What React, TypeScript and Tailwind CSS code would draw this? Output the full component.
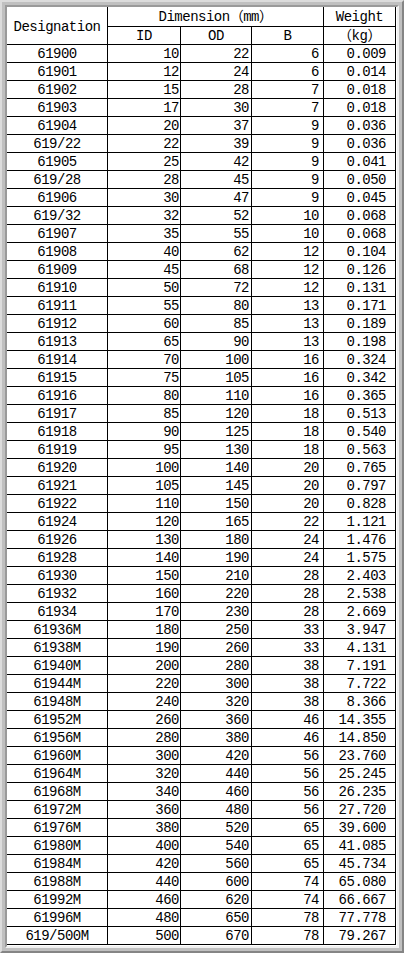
import React from "react";

const rows: [string, string, string, string, string][] = [
  ["61900", "10", "22", "6", "0.009"],
  ["61901", "12", "24", "6", "0.014"],
  ["61902", "15", "28", "7", "0.018"],
  ["61903", "17", "30", "7", "0.018"],
  ["61904", "20", "37", "9", "0.036"],
  ["619/22", "22", "39", "9", "0.036"],
  ["61905", "25", "42", "9", "0.041"],
  ["619/28", "28", "45", "9", "0.050"],
  ["61906", "30", "47", "9", "0.045"],
  ["619/32", "32", "52", "10", "0.068"],
  ["61907", "35", "55", "10", "0.068"],
  ["61908", "40", "62", "12", "0.104"],
  ["61909", "45", "68", "12", "0.126"],
  ["61910", "50", "72", "12", "0.131"],
  ["61911", "55", "80", "13", "0.171"],
  ["61912", "60", "85", "13", "0.189"],
  ["61913", "65", "90", "13", "0.198"],
  ["61914", "70", "100", "16", "0.324"],
  ["61915", "75", "105", "16", "0.342"],
  ["61916", "80", "110", "16", "0.365"],
  ["61917", "85", "120", "18", "0.513"],
  ["61918", "90", "125", "18", "0.540"],
  ["61919", "95", "130", "18", "0.563"],
  ["61920", "100", "140", "20", "0.765"],
  ["61921", "105", "145", "20", "0.797"],
  ["61922", "110", "150", "20", "0.828"],
  ["61924", "120", "165", "22", "1.121"],
  ["61926", "130", "180", "24", "1.476"],
  ["61928", "140", "190", "24", "1.575"],
  ["61930", "150", "210", "28", "2.403"],
  ["61932", "160", "220", "28", "2.538"],
  ["61934", "170", "230", "28", "2.669"],
  ["61936M", "180", "250", "33", "3.947"],
  ["61938M", "190", "260", "33", "4.131"],
  ["61940M", "200", "280", "38", "7.191"],
  ["61944M", "220", "300", "38", "7.722"],
  ["61948M", "240", "320", "38", "8.366"],
  ["61952M", "260", "360", "46", "14.355"],
  ["61956M", "280", "380", "46", "14.850"],
  ["61960M", "300", "420", "56", "23.760"],
  ["61964M", "320", "440", "56", "25.245"],
  ["61968M", "340", "460", "56", "26.235"],
  ["61972M", "360", "480", "56", "27.720"],
  ["61976M", "380", "520", "65", "39.600"],
  ["61980M", "400", "540", "65", "41.085"],
  ["61984M", "420", "560", "65", "45.734"],
  ["61988M", "440", "600", "74", "65.080"],
  ["61992M", "460", "620", "74", "66.667"],
  ["61996M", "480", "650", "78", "77.778"],
  ["619/500M", "500", "670", "78", "79.267"],
];

const font = "font-['Liberation_Mono','Noto_Sans_CJK_SC',monospace] text-[14px] tracking-[-0.5px] text-black";

export default function App() {
  return (
    <div className="w-[404px] h-[953px] bg-[#c0c0c0] border-2 border-t-[#dcdcdc] border-l-[#dcdcdc] border-r-[#858585] border-b-[#858585] p-[3px] box-border">
      <div className="w-full h-full bg-white border-2 border-t-[#9a9a9a] border-l-[#9a9a9a] border-r-[#f0f0f0] border-b-[#f0f0f0] box-border">
        <div className={`grid grid-cols-[101px_73px_71px_72px_72px] grid-rows-[20px_18px] auto-rows-[18px] w-[389px] leading-none ${font}`}>
          <div className="row-span-2 border-r border-b border-black flex items-center justify-center pt-[2px]">Designation</div>
          <div className="col-span-3 border-r border-b border-black flex items-center justify-center pt-[1px]">Dimension（mm）</div>
          <div className="border-r border-b border-black flex items-center justify-center pt-[1px]">Weight</div>
          <div className="border-r border-b border-black flex items-center justify-center">ID</div>
          <div className="border-r border-b border-black flex items-center justify-center">OD</div>
          <div className="border-r border-b border-black flex items-center justify-center">B</div>
          <div className="border-r border-b border-black flex items-center justify-center">（kg）</div>
          {rows.map((r) => (
            <React.Fragment key={r[0]}>
              <div className="border-r border-b border-black flex items-center justify-center">{r[0]}</div>
              <div className="border-r border-b border-black flex items-center justify-end pr-[1px]">{r[1]}</div>
              <div className="border-r border-b border-black flex items-center justify-end pr-[2px]">{r[2]}</div>
              <div className="border-r border-b border-black flex items-center justify-end pr-[4px]">{r[3]}</div>
              <div className="border-r border-b border-black flex items-center justify-end pr-[9px]">{r[4]}</div>
            </React.Fragment>
          ))}
        </div>
      </div>
    </div>
  );
}
